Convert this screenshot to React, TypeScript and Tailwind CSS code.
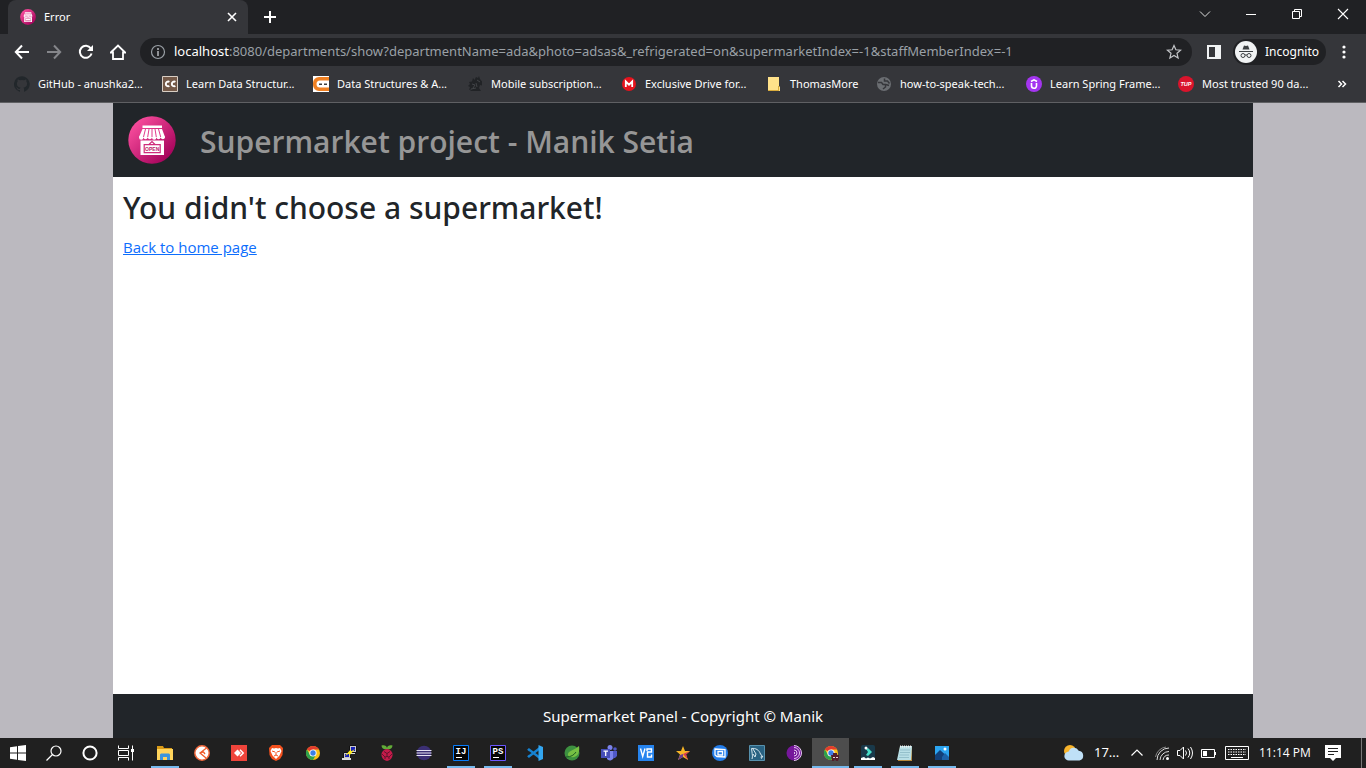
import React from "react";
import type { ReactNode } from "react";

const UI = "font-['Noto_Sans','Open_Sans',sans-serif]";

function StoreLogo({ className }: { className: string }) {
  return (
    <svg viewBox="0 0 48 48" className={className} aria-hidden="true">
      <defs>
        <linearGradient id="store" x1="0.1" y1="0.1" x2="0.9" y2="0.9">
          <stop offset="0" stopColor="#fb4f9f" />
          <stop offset="1" stopColor="#a10058" />
        </linearGradient>
      </defs>
      <circle cx="24" cy="24" r="23.7" fill="url(#store)" />
      <path d="M14.500 9.5h19.500v2.500H14.500zM14.500 13h19.500l3 8H11z" fill="#fff" />
      <path d="M11 20.500h26v1a2.200 2.200 0 0 1-4.300 0 2.200 2.200 0 0 1-4.300 0 2.200 2.200 0 0 1-4.400 0 2.200 2.200 0 0 1-4.300 0 2.200 2.200 0 0 1-4.300 0 2.200 2.200 0 0 1-4.400 0z" fill="#fff" />
      <path d="M17.500 13l-2 8M21 13l-1.300 8M24 13v8M27 13l1.300 8M30.500 13l2.200 8" stroke="#e23b8c" strokeWidth="1" />
      <path d="M12.500 24.500h23.500v14.500h-23.500z" fill="#fff" />
      <path d="M21 28.500l3-3 3 3" fill="none" stroke="#cf2c7c" strokeWidth="1.200" />
      <path d="M16.200 28.700h16v8h-16z" fill="none" stroke="#cf2c7c" strokeWidth="1.200" />
      <text x="24.200" y="34.800" textAnchor="middle" fontSize="5" fontWeight="700" fill="#b81a68" fontFamily="Liberation Sans, sans-serif">OPEN</text>
    </svg>
  );
}

function Glyph({ children, label, className = "size-4" }: { children: ReactNode; label?: string; className?: string }) {
  return (
    <svg viewBox="0 0 16 16" className={`${className} shrink-0`} fill="none" aria-hidden={label ? undefined : true} aria-label={label}>
      {children}
    </svg>
  );
}

const bookmarks: { name: string; width: string; icon: ReactNode }[] = [
  {
    name: "GitHub - anushka2...",
    width: "w-[148px]",
    icon: <path fill="#22272b" d="M8 .2A8 8 0 0 0 5.500 15.800c.4.100.5-.200.5-.4v-1.500c-2.200.500-2.700-1-2.700-1-.4-.9-.9-1.200-.9-1.200-.7-.5.100-.5.100-.5.800.100 1.200.8 1.200.8.700 1.200 1.900.9 2.300.7.100-.5.300-.9.500-1.100-1.800-.2-3.600-.9-3.600-4 0-.9.300-1.600.8-2.100-.1-.200-.4-1 .100-2.100 0 0 .7-.200 2.200.8a7.600 7.600 0 0 1 4 0c1.500-1 2.200-.8 2.200-.8.400 1.100.200 1.900.100 2.100.5.600.8 1.300.8 2.100 0 3.100-1.900 3.800-3.700 4 .3.300.6.800.6 1.500v2.200c0 .200.100.500.500.4A8 8 0 0 0 8 .2z" />,
  },
  {
    name: "Learn Data Structur...",
    width: "w-[151px]",
    icon: (
      <>
        <path fill="#745948" stroke="#d8cec4" d="M.5.5h15v15H.5z" />
        <path d="M7.400 5.800a2.400 2.400 0 1 0 0 4.200M13.400 5.800a2.400 2.400 0 1 0 0 4.200" stroke="#fff" strokeWidth="1.900" />
      </>
    ),
  },
  {
    name: "Data Structures & A...",
    width: "w-[154px]",
    icon: (
      <>
        <path fill="#fff" d="M0 0h16v16H0z" />
        <path fill="#ef8022" d="M6 1h10v3.500H7a3.500 3.500 0 0 0 0 7h9V15H6a6 6 0 0 1-6-6V7a6 6 0 0 1 6-6z" />
        <path fill="#3c3c3c" d="M6 7.500h3v1.500H6zM11 7.500h3v1.500h-3z" />
      </>
    ),
  },
  {
    name: "Mobile subscription...",
    width: "w-[154px]",
    icon: (
      <>
        <path d="M6 2l1.500 2L9 1l2 1 1-2 1 3 2 2.500v4L13 9l-1 3 2 3H3l2-2-3 1 1-3-2-1 2-2-1-2 3-.5z" fill="#212326" />
        <path d="M10 4l3 2M5 8l3 1-2 3M9 7l1 4M4 13l5-1" stroke="#45474b" strokeWidth=".9" />
      </>
    ),
  },
  {
    name: "Exclusive Drive for...",
    width: "w-[145px]",
    icon: (
      <>
        <circle cx="8" cy="8" r="7" fill="#e5131d" />
        <path d="M4.800 11V5.500L8 8.700l3.200-3.200V11" stroke="#fff" strokeWidth="1.800" />
      </>
    ),
  },
  {
    name: "ThomasMore",
    width: "w-[110px]",
    icon: (
      <>
        <path fill="#ffe28a" d="M2 1h11v9l1 1v4H2z" />
        <path fill="#d9ac3c" d="M2 14h10v1H2zM12 10h1v5h-1z" />
      </>
    ),
  },
  {
    name: "how-to-speak-tech...",
    width: "w-[150px]",
    icon: (
      <>
        <circle cx="8" cy="8" r="7" fill="#6b6e72" />
        <path d="M2 6.500h3.500l1.500 2h2.500V11L7 13M8.500 2.500V5h3l2 2.500M10 8.500l3 1" stroke="#36373b" strokeWidth="1.500" />
      </>
    ),
  },
  {
    name: "Learn Spring Frame...",
    width: "w-[152px]",
    icon: (
      <>
        <circle cx="8" cy="8" r="8" fill="#a435f0" />
        <path d="M5.500 7v2.800a2.500 2.500 0 0 0 5 0V7M5 5.500L8 3.800l3 1.700" stroke="#fff" strokeWidth="1.600" />
      </>
    ),
  },
  {
    name: "Most trusted 90 da...",
    width: "w-[136px]",
    icon: (
      <>
        <circle cx="8" cy="8" r="8" fill="#d9142c" />
        <text x="8" y="10" textAnchor="middle" fontSize="5.500" fontWeight="700" fontStyle="italic" fill="#fff" fontFamily="Liberation Sans, sans-serif">TUP</text>
      </>
    ),
  },
];

const Chrome = () => (
  <>
    <circle cx="8" cy="8" r="7" fill="#fbc116" />
    <path d="M8 8L1.900 4.500A7 7 0 0 1 14.100 4.500H8z" fill="#e33b2e" />
    <path d="M1.900 4.500A7 7 0 0 0 8 15l3-5.300H5z" fill="#2da14c" />
    <circle cx="8" cy="8" r="3.600" fill="#fff" />
    <circle cx="8" cy="8" r="2.700" fill="#3b7fe8" />
  </>
);

const Ide = ({ text, color }: { text: string; color: string }) => (
  <>
    <path fill="#050505" stroke={color} d="M.5.5h15v15H.5z" />
    <text x="2.500" y="9" fontSize="9" fontWeight="700" fill="#fff" fontFamily="Liberation Mono, monospace">{text}</text>
    <path fill="#fff" d="M3 12h6v1H3z" />
  </>
);

type Task = { name: string; open?: boolean; active?: boolean; icon: ReactNode };

const tasks: Task[] = [
  {
    name: "File Explorer",
    open: true,
    icon: (
      <>
        <path fill="#d99a17" d="M0 1h6l1 2h8v3H0z" />
        <path fill="#ffd45c" d="M0 4h16v11H0z" />
        <path fill="#3b94dc" d="M3 15V9.500L4 8.500h8l1 1V15h-3v-3H6v3z" />
      </>
    ),
  },
  {
    name: "Postman",
    icon: (
      <>
        <circle cx="8" cy="8" r="7.200" fill="#fff" stroke="#f0683c" strokeWidth="1.500" />
        <path d="M12.500 3L6 8l6 5M6.500 8l3-1 1.500 2" stroke="#ef5b2b" strokeWidth="1.300" />
      </>
    ),
  },
  {
    name: "AnyDesk",
    icon: (
      <>
        <path fill="#ef443b" d="M0 0h16v16H0z" />
        <path fill="#fff" d="M3 8l3.500-3.500L10 8l-3.500 3.500z" />
        <path d="M9 4.800L12.200 8 9 11.200" stroke="#fff" strokeWidth="1.500" />
      </>
    ),
  },
  {
    name: "Brave",
    icon: (
      <>
        <path fill="#f4511e" d="M4 0h8l3 3-.5 7L12 14l-4 2-4-2-2.500-4L1 3z" />
        <path fill="#fff" d="M4 3l2 .5L8 3l2 .5 2-.5 1.500 3-2 4.500L8 14l-3.500-3.500L2.500 6z" />
        <path d="M4 6l3 1M12 6L9 7M8 7v3l-2 1M8 10l2 1" stroke="#f4511e" />
      </>
    ),
  },
  { name: "Chrome", icon: <Chrome /> },
  {
    name: "PuTTY",
    icon: (
      <>
        <path fill="#c9c9c9" stroke="#111" d="M7.500.5h7v7h-7zM1.500 7.500h7v6h-7z" />
        <path fill="#dcdcdc" d="M0 13h9v2H0zM6 8h7v1H8z" />
        <path fill="#1822b8" d="M9 2h4v4H9zM3 9h4v3H3z" />
        <path fill="#ffee1a" d="M3 11l6-7v2.500L13 4l-6 7V8.500z" />
      </>
    ),
  },
  {
    name: "Raspberry Pi",
    icon: (
      <>
        <path fill="#62ac38" d="M8 4C5 5 2.500 3 2.500.5 6-.2 7.500 1 8 3 8.500 1 10-.2 13.500.5 13.500 3 11 5 8 4z" />
        <path fill="#c51a4a" d="M8 4c3 0 6 3 5.500 6.500S10 15.500 8 16c-2-.5-5-2-5.500-5.500S5 4 8 4z" />
        <path d="M5 6.500l3 2 3-2M8 8.500v3M3 9l3 3 2-.5 2 .5 3-3M6 12v2M10 12v2" stroke="#4a1325" strokeWidth=".8" />
      </>
    ),
  },
  {
    name: "Eclipse",
    icon: (
      <>
        <circle cx="8" cy="8" r="7.300" fill="#3b2f73" />
        <path d="M.5 5.500h15M.5 8h15M.5 10.500h15" stroke="#e5e2f2" strokeWidth="1.200" />
      </>
    ),
  },
  { name: "IntelliJ IDEA", open: true, icon: <Ide text="IJ" color="#087cfa" /> },
  { name: "PhpStorm", open: true, icon: <Ide text="PS" color="#6b57ff" /> },
  {
    name: "Visual Studio Code",
    icon: (
      <>
        <path d="M1 5.500l1-1L13 13M1 10.500l1 1L13 3" stroke="#1683d2" strokeWidth="2.400" />
        <path fill="#33a6f0" d="M11.500 0L16 2v12l-4.500 2z" />
      </>
    ),
  },
  {
    name: "Spring Tools",
    icon: (
      <>
        <circle cx="8" cy="8" r="7.500" fill="#3d9140" />
        <path fill="#76c043" d="M15 1c1 6-1 10-5 11-3 .7-5-.5-6-1.500C3 6 9 6 15 1z" />
        <path d="M2 12c5 0 8-2 10-5" stroke="#1f5f25" />
      </>
    ),
  },
  {
    name: "Microsoft Teams",
    icon: (
      <>
        <circle cx="9" cy="2.500" r="2.500" fill="#7b83eb" />
        <circle cx="14" cy="4" r="1.800" fill="#5059c9" />
        <path fill="#7b83eb" d="M6 6h7v6a4 4 0 0 1-7 2z" />
        <path fill="#5059c9" d="M12 6h4v5l-2 2h-2z" />
        <path fill="#464eb8" d="M0 4h9v9H0z" />
        <path d="M2.500 6.200h4.500M4.700 6.200V11" stroke="#fff" strokeWidth="1.300" />
      </>
    ),
  },
  {
    name: "VNC Viewer",
    icon: (
      <>
        <path fill="#2684ee" d="M0 0h16v16H0z" />
        <path d="M2.500 3.500l2.200 8 2.300-8M9 6V4h4.500v3H9.500v5h4V9.500" stroke="#fff" strokeWidth="1.400" />
      </>
    ),
  },
  {
    name: "Star",
    icon: (
      <>
        <path fill="#f7b526" d="M8 1l2 5h5l-4 3.500 2 5.500-5-3-5 3 2-5.500L1 6h5z" />
        <path fill="#d63a55" d="M8 9l7-3-4 3.500 2 5.500z" />
        <path fill="#6b3f91" d="M8 9v3l-5 3 2-5z" />
      </>
    ),
  },
  {
    name: "Remote Screen",
    icon: (
      <>
        <circle cx="8" cy="8" r="8" fill="#237deb" />
        <path d="M3 4l10 .500v7.500L5 11.500 3 10zM6 6.500h4.500V10H6z" stroke="#fff" strokeWidth="1.300" />
      </>
    ),
  },
  {
    name: "MySQL Workbench",
    icon: (
      <>
        <path fill="#296282" stroke="#5791ad" d="M.5.5h15v15H.5z" />
        <path d="M3 14c1-3 0-5 0-7L2.500 3.500C7 3 10 5 11.500 9l2.500 3-2-.3.500 2M4 4l3 5-1 3-2-3" stroke="#d8e8ef" />
      </>
    ),
  },
  {
    name: "Tor Browser",
    icon: (
      <>
        <circle cx="8" cy="8" r="7.500" fill="#76179b" />
        <path d="M8 2.500a5.500 5.500 0 0 1 0 11M8 5a3 3 0 0 1 0 6M8 .5a7.500 7.500 0 0 1 0 15" stroke="#e6c9f2" />
        <path fill="#fff" d="M8 7a1 1 0 0 1 0 2z" />
      </>
    ),
  },
  {
    name: "Chrome Incognito",
    open: true,
    active: true,
    icon: (
      <>
        <Chrome />
        <path fill="#521f2b" d="M8 10h2V8h4v2h2v3l-1 3h-2l-1-2-1 2H9z" />
        <path fill="#e6d6d6" d="M10 12h2v1h-2zM13 12h2v1h-2z" />
      </>
    ),
  },
  {
    name: "Filmora",
    open: true,
    icon: (
      <>
        <rect x="1" width="14" height="14" rx="2" fill="#19394a" />
        <path fill="#48dec8" d="M6 4l2-1 4 4-4 4-2-1 2-3z" />
        <circle cx="6" cy="3" r="1.500" fill="#fff" />
        <path fill="#fff" d="M1 13l3-1 2 1.500 2-1 2 1 3-1.500 2 1v2H1z" />
      </>
    ),
  },
  {
    name: "Notepad",
    open: true,
    icon: (
      <>
        <path fill="#b6873a" d="M3 2h12v14H1z" />
        <path fill="#b8dfe6" d="M3 1h12l-1 14H0z" />
        <path d="M3 5h10M3 7.500h10M2.500 10H12M2 12.500h10" stroke="#84b3bf" strokeWidth=".7" />
        <path d="M3 1.500h12" stroke="#f2f2f2" strokeDasharray="1 1" strokeWidth="2" />
      </>
    ),
  },
  {
    name: "Photos",
    open: true,
    icon: (
      <>
        <path fill="#2ba5f1" d="M1 1h14v14H1z" />
        <path fill="#124079" d="M1 10l5-5 9 8v2H1z" />
        <path fill="#1c62a8" d="M8 12l3-4 4 4v3H8z" />
        <circle cx="11" cy="4" r="1.500" fill="#fff" />
      </>
    ),
  },
];

function IconButton({ label, className = "size-8", children }: { label: string; className?: string; children: ReactNode }) {
  return (
    <button type="button" aria-label={label} className={`flex shrink-0 items-center justify-center ${className}`}>
      {children}
    </button>
  );
}

function TabStrip() {
  return (
    <div className="flex h-[34px] items-stretch pl-2">
      <div className="flex w-60 items-center rounded-t-lg bg-[#35363a] pr-2 pl-3 text-[12px] text-white">
        <StoreLogo className="mr-2 size-4" />
        <span className="flex-1 text-[11px]">Error</span>
        <IconButton label="Close tab" className="size-4">
          <Glyph><path d="M4 4l8 8M12 4l-8 8" stroke="#fff" strokeWidth="1.600" /></Glyph>
        </IconButton>
      </div>
      <IconButton label="New tab" className="w-11">
        <Glyph><path d="M8 2v12M2 8h12" stroke="#fff" strokeWidth="2" /></Glyph>
      </IconButton>
      <div className="ml-auto flex h-7">
        <IconButton label="Search tabs" className="w-[46px]"><Glyph><path d="M3 5.500l5 5 5-5" stroke="#ddd" /></Glyph></IconButton>
        <IconButton label="Minimize" className="w-[46px]"><Glyph><path d="M3 8.500h10" stroke="#fff" /></Glyph></IconButton>
        <IconButton label="Restore" className="w-[46px]"><Glyph><path d="M3.500 5.500h7v7h-7zM5.500 5V3.500h7v7H11" stroke="#fff" /></Glyph></IconButton>
        <IconButton label="Close" className="w-[46px]"><Glyph><path d="M3 3l10 10M13 3L3 13" stroke="#fff" strokeWidth="1.100" /></Glyph></IconButton>
      </div>
    </div>
  );
}

function Toolbar() {
  return (
    <div className="flex h-9 items-center bg-[#35363a] pr-[6px] pl-[6px]">
      <IconButton label="Back"><Glyph><path d="M15 8H2M8 1.500L1.800 8 8 14.500" stroke="#fff" strokeWidth="2" /></Glyph></IconButton>
      <IconButton label="Forward"><Glyph><path d="M1 8h13M8 1.500L14.200 8 8 14.500" stroke="#85868a" strokeWidth="2" /></Glyph></IconButton>
      <IconButton label="Reload">
        <Glyph>
          <path d="M13.600 9.500a6 6 0 1 1-.8-5.100" stroke="#fff" strokeWidth="2" />
          <path fill="#fff" d="M15 1v6H9z" />
        </Glyph>
      </IconButton>
      <IconButton label="Home"><Glyph><path d="M.8 8.500L8 1.500l7.200 7H13V15H3V8.500z" stroke="#fff" strokeWidth="1.800" /></Glyph></IconButton>
      <div className="ml-[6px] flex h-7 min-w-0 flex-1 items-center rounded-full bg-[#202124] pr-[10px] pl-[10px]">
        <Glyph>
          <circle cx="8" cy="8" r="6.500" stroke="#9aa0a6" strokeWidth="1.200" />
          <path d="M8 7v5M8 4v2" stroke="#b5b8bc" strokeWidth="1.500" />
        </Glyph>
        <a href="#address" className="ml-2 min-w-0 flex-1 truncate text-[13px] text-[#9aa0a6]">
          <span className="text-white">localhost</span>:8080/departments/show?departmentName=ada&amp;photo=adsas&amp;_refrigerated=on&amp;supermarketIndex=-1&amp;staffMemberIndex=-1
        </a>
        <IconButton label="Bookmark this page" className="size-4">
          <Glyph><path d="M8 1.500l1.900 4.300 4.700.4-3.600 3.100 1.100 4.600L8 11.500l-4.100 2.400L5 9.300 1.400 6.200l4.700-.4z" stroke="#c4c6c9" strokeWidth="1.200" /></Glyph>
        </IconButton>
      </div>
      <IconButton label="Side panel" className="ml-[6px] size-8"><Glyph><path fill="#f1f3f4" fillRule="evenodd" d="M1 1h14v14H1zm2 2v10h6V3z" /></Glyph></IconButton>
      <button type="button" className="ml-[3px] flex h-[26px] items-center gap-2 rounded-full bg-[#202124] pr-[7px] pl-[2px] text-[12px] text-white">
        <svg viewBox="0 0 22 22" className="size-[22px]" fill="none" aria-hidden="true">
          <circle cx="11" cy="11" r="11" fill="#f1f3f4" />
          <path fill="#3c4043" d="M7.500 8.500L9 4.500l2 .5 2-.5 1.500 4zM4 10h14v1H4z" />
          <circle cx="8" cy="14.500" r="2" stroke="#3c4043" /><circle cx="14" cy="14.500" r="2" stroke="#3c4043" />
          <path d="M10 14h2" stroke="#3c4043" />
        </svg>
        Incognito
      </button>
      <IconButton label="Menu" className="ml-[2px] size-8">
        <Glyph><circle cx="8" cy="3" r="1.600" fill="#fff" /><circle cx="8" cy="8" r="1.600" fill="#fff" /><circle cx="8" cy="13" r="1.600" fill="#fff" /></Glyph>
      </IconButton>
    </div>
  );
}

function Bookmarks() {
  return (
    <nav aria-label="Bookmarks" className="flex h-[33px] items-start border-b border-[#5f6063] bg-[#35363a] pr-4 pl-[14px] text-[11px] text-white">
      <div className="flex min-w-0 flex-1 overflow-hidden">
        {bookmarks.map((b) => (
          <a key={b.name} href="#bookmark" className={`flex h-7 shrink-0 items-center gap-2 whitespace-nowrap ${b.width}`}>
            <Glyph>{b.icon}</Glyph>
            {b.name}
          </a>
        ))}
      </div>
      <button type="button" aria-label="More bookmarks" className="flex h-7 items-center">
        <Glyph><path d="M4.500 5l3 3-3 3M8.500 5l3 3-3 3" stroke="#fff" strokeWidth="1.500" /></Glyph>
      </button>
    </nav>
  );
}

function Taskbar() {
  return (
    <footer className="flex h-[30px] shrink-0 items-stretch bg-[#202020] text-[12px] text-white">
      <IconButton label="Start" className="w-9"><Glyph><path fill="#fff" d="M0 2.200l7-1v6.300H0zM8 1l8-1v7.500H8zM0 8.500h7v6.300l-7-1zM8 8.500h8V16l-8-1z" /></Glyph></IconButton>
      <IconButton label="Search" className="w-9"><Glyph><circle cx="10" cy="6" r="5" stroke="#fff" strokeWidth="1.200" /><path d="M6.500 9.500L.5 15.500" stroke="#fff" strokeWidth="1.300" /></Glyph></IconButton>
      <IconButton label="Cortana" className="w-9"><Glyph><circle cx="8" cy="8" r="6.600" stroke="#fff" strokeWidth="2" /></Glyph></IconButton>
      <IconButton label="Task view" className="w-9"><Glyph><path d="M.5.500V3.500h10V.500M.5 15.500v-3h10v3M.5 5.500h10v5H.5zM14.500.500v15" stroke="#fff" /><path fill="#fff" d="M13 4h3v3h-3z" /></Glyph></IconButton>
      <div className="ml-[2px] flex min-w-0 flex-1 overflow-hidden">
        {tasks.map((t) => (
          <button
            type="button"
            key={t.name}
            aria-label={t.name}
            className={`flex w-[37px] shrink-0 flex-col items-center ${t.active ? "bg-[#4d4d4d]" : ""}`}
          >
            <span className="flex h-7 items-center pt-[2px]"><Glyph>{t.icon}</Glyph></span>
            {t.open && <span className={`h-[2px] bg-[#76b9ed] ${t.active ? "w-full" : "w-7"}`} />}
          </button>
        ))}
      </div>
      <div className="flex shrink-0 items-center">
        <svg viewBox="0 0 20 16" className="mr-[10px] h-4 w-5" aria-hidden="true">
          <circle cx="6" cy="6" r="6" fill="#f7b32b" />
          <path fill="#bfe0f7" d="M5 15.500a4.500 4.500 0 0 1-.3-9 5.500 5.500 0 0 1 10-.8 5 5 0 0 1 .8 9.800z" />
        </svg>
        <span className="w-[35px] text-[13px]">17...</span>
        <Glyph><path d="M2.500 10.500L8 5l5.500 5.500" stroke="#fff" strokeWidth="1.200" /></Glyph>
        <Glyph className="ml-[10px] size-4">
          <path d="M2 15A12 12 0 0 1 14 3M5 15A9 9 0 0 1 14 6.500M8 15a6 6 0 0 1 6-5" stroke="#ddd" />
          <path d="M.5 12A12 12 0 0 1 11 2" stroke="#888" />
          <circle cx="12.500" cy="13.500" r="1.500" fill="#fff" />
        </Glyph>
        <Glyph className="ml-[6px] size-4"><path d="M.5 5.500H3L6.500 2v12L3 10.500H.5zM8.500 5.500q2 2.500 0 5M11 3.500q3.500 4.500 0 9M13.500 2q4 6 0 12" stroke="#fff" /></Glyph>
        <Glyph className="ml-2 size-4"><path d="M.5 4.500h13v8H.5zM14.500 7v3" stroke="#fff" /><path fill="#fff" d="M2 6h4v5H2z" /></Glyph>
        <svg viewBox="0 0 24 14" className="ml-2 h-[14px] w-6" fill="none" aria-hidden="true">
          <path d="M.5.5h23v13H.5z" stroke="#fff" />
          <path d="M3 3.500h18M3 6h18M3 8.500h18" stroke="#fff" strokeDasharray="1.500 1" />
          <path d="M6 11.500h12" stroke="#fff" />
        </svg>
        <time className="ml-[10px] w-[66px] whitespace-nowrap font-['Open_Sans',sans-serif]">11:14 PM</time>
        <svg viewBox="0 0 16 16" className="size-4" aria-hidden="true">
          <path fill="#fff" d="M0 0h16v13h-5l-3 3-3-3H0z" />
          <path d="M3 3.500h10M3 6.500h10M3 9.500h6" stroke="#202020" />
        </svg>
        <span className="ml-5 h-[30px] w-[5px] border-l border-[#777]" />
      </div>
    </footer>
  );
}

export default function App() {
  return (
    <div className={`flex min-h-screen flex-col bg-[#bbb9bf] ${UI}`}>
      <header className="shrink-0 bg-[#202124]">
        <TabStrip />
        <Toolbar />
        <Bookmarks />
      </header>
      <div className="mx-auto flex w-full max-w-[1140px] flex-1 flex-col bg-white text-[#212529]">
        <header className="flex items-center bg-[#212529] px-[15px] py-[13px]">
          <StoreLogo className="size-12" />
          <span className="ml-6 pt-1 font-['Open_Sans',sans-serif] text-[30px] leading-9 font-semibold text-[#969696]">Supermarket project - Manik Setia</span>
        </header>
        <main className="flex-1 px-[10px] pt-3">
          <h1 className="text-[30px] leading-[38px] font-medium">You didn't choose a supermarket!</h1>
          <a href="#home" className="mt-2 inline-block font-['Open_Sans',sans-serif] text-[15px] leading-6 text-[#0d6efd] underline">Back to home page</a>
        </main>
        <footer className="bg-[#212529] py-[10px] text-center text-[15px] leading-6 text-white">
          Supermarket Panel - Copyright © Manik
        </footer>
      </div>
      <Taskbar />
    </div>
  );
}
